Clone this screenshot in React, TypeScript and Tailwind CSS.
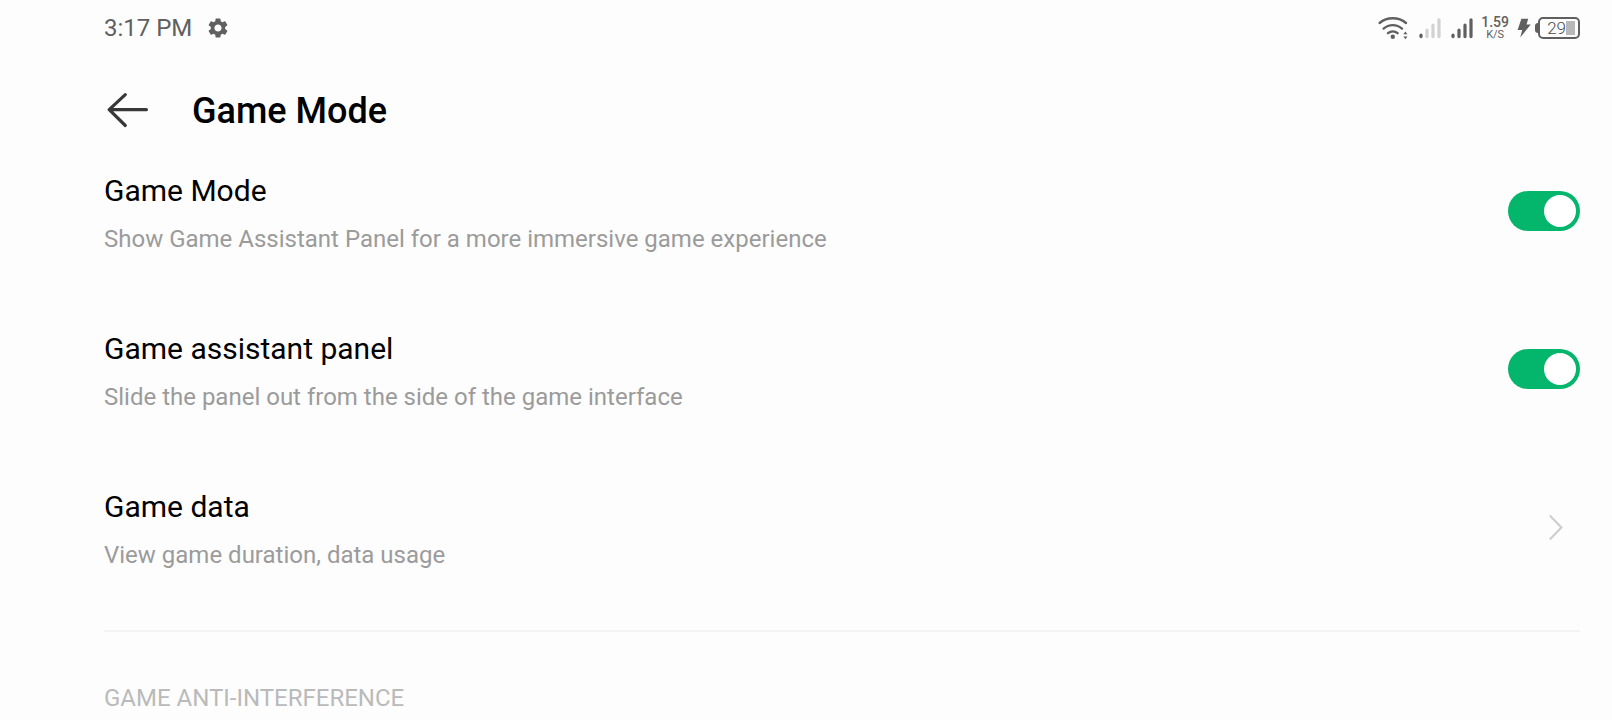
import { useState } from "react";
import { MdSettings } from "react-icons/md";

function WifiIcon() {
  return (
    <svg viewBox="0 0 32 24" className="h-6 w-8" fill="none" stroke="#606060" strokeWidth="2.4" strokeLinecap="round" aria-hidden="true">
      <path d="M2.6 7C10 .7 21.6.7 29 7" />
      <path d="M6.6 12.6c5.3-4.7 13.1-4.7 18.4 0" />
      <path d="M11 17.2c2.8-2.4 6.8-2.4 9.6 0" />
      <circle cx="15.8" cy="20.8" r="2.2" fill="#606060" stroke="none" />
      <path d="M28.4 15.4l2.1 2.8h-4.2zM28.4 23.2l2.1-2.8h-4.2z" fill="#606060" stroke="none" />
    </svg>
  );
}

function SignalIcon({ full }: { full: boolean }) {
  const rest = full ? "#606060" : "#d2d2d2";
  return (
    <svg viewBox="0 0 22 24" className="h-6 w-[22px]" strokeWidth="3.2" strokeLinecap="round" aria-hidden="true">
      <path d="M2 19.2v1.4" stroke="#606060" />
      <path d="M8 14v6.6M14 9.2v11.4M20 3.8v16.8" stroke={rest} />
    </svg>
  );
}

function BoltIcon() {
  return (
    <svg viewBox="0 0 14 20" className="h-5 w-3.5" fill="#606060" aria-hidden="true">
      <path d="M4.4.8h6.8L9.5 6.6h4.3L3.2 19.4l2-7.4H.6z" />
    </svg>
  );
}

function Battery({ level }: { level: number }) {
  return (
    <div className="flex items-center">
      <span className="h-2.5 w-[3px] rounded-l-sm bg-[#606060]" />
      <div className="flex h-[22px] w-[42px] items-center justify-end rounded-[5px] border-2 border-[#606060] pr-[3px] text-[17px] leading-4 text-[#4a4a4a]">
        <span className="font-light">{level}</span>
        <span className="h-3.5 w-[9px] bg-[#b8b8b8]" />
      </div>
    </div>
  );
}

function StatusBar() {
  return (
    <div className="flex h-14 items-center justify-between text-[#606060]">
      <div className="flex items-center gap-3.5">
        <span className="text-2xl leading-6">3:17 PM</span>
        <MdSettings className="size-6" aria-hidden="true" />
      </div>
      <div className="flex items-center gap-2">
        <div className="flex items-center gap-2.5">
          <WifiIcon />
          <SignalIcon full={false} />
          <SignalIcon full />
        </div>
        <div className="flex flex-col items-center">
          <span className="text-sm leading-[13px] font-medium">1.59</span>
          <span className="text-[11px] leading-[11px]">K/S</span>
        </div>
        <div className="flex items-center gap-1">
          <BoltIcon />
          <Battery level={29} />
        </div>
      </div>
    </div>
  );
}

function RowText({ title, note }: { title: string; note: string }) {
  return (
    <span className="flex flex-col gap-4">
      <span className="text-[30px] leading-10 text-black">{title}</span>
      <span className="text-2xl leading-6 text-[#9b9b9b]">{note}</span>
    </span>
  );
}

function SwitchRow({ title, note }: { title: string; note: string }) {
  const [on, setOn] = useState(true);
  return (
    <label className="flex cursor-pointer items-center justify-between py-[39px]">
      <RowText title={title} note={note} />
      <input
        type="checkbox"
        role="switch"
        checked={on}
        onChange={(e) => setOn(e.target.checked)}
        className="flex h-10 w-[72px] shrink-0 cursor-pointer appearance-none items-center rounded-full bg-[#d5d5d5] px-1 before:size-8 before:rounded-full before:bg-white before:content-[''] checked:justify-end checked:bg-[#04b66b]"
      />
    </label>
  );
}

export default function App() {
  return (
    <div className="min-h-screen bg-[#fdfdfd] pr-8 pl-[104px] font-['Roboto',sans-serif]">
      <StatusBar />
      <header className="flex items-center gap-10 pt-[34px]">
        <button type="button" aria-label="Back" className="cursor-pointer">
          <svg viewBox="0 2 48 42" className="h-[42px] w-12" fill="none" stroke="#383838" strokeWidth="3.2" strokeLinecap="round" strokeLinejoin="round">
            <path d="M21.3 6.6L5.2 21.7l16.1 15.8M5.2 21.7h37.2" />
          </svg>
        </button>
        <h1 className="text-4xl leading-[42px] font-medium text-black">Game Mode</h1>
      </header>
      <main>
        <SwitchRow title="Game Mode" note="Show Game Assistant Panel for a more immersive game experience" />
        <SwitchRow title="Game assistant panel" note="Slide the panel out from the side of the game interface" />
        <a href="#game-data" className="flex items-center justify-between py-[39px]">
          <RowText title="Game data" note="View game duration, data usage" />
          <svg viewBox="0 0 16 28" className="mr-4 h-7 w-4" fill="none" stroke="#cfcfcf" strokeWidth="2.2" aria-hidden="true">
            <path d="M1.8 2.6L13.4 14.6 1.8 26.6" />
          </svg>
        </a>
        <hr className="mt-6 border-t-2 border-[#f3f3f3]" />
        <h2 className="mt-[50px] text-2xl leading-8 text-[#bababa]">GAME ANTI-INTERFERENCE</h2>
      </main>
    </div>
  );
}
